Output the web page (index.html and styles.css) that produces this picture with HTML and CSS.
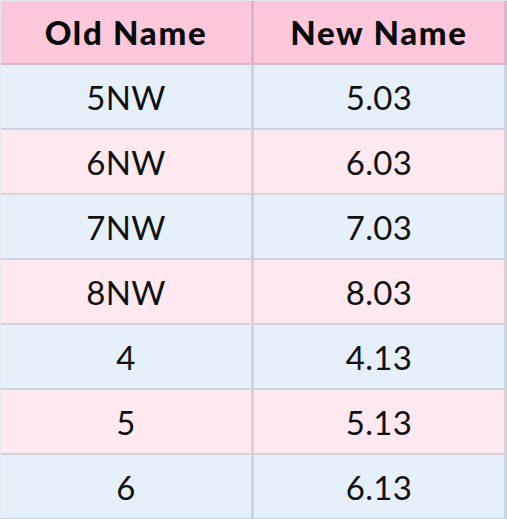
FILE: index.html
```html
<!DOCTYPE html>
<html>
<head>
<meta charset="utf-8">
<link rel="stylesheet" href="styles.css">
</head>
<body>
<table class="names">
  <thead>
    <tr><th>Old Name</th><th>New Name</th></tr>
  </thead>
  <tbody>
    <tr class="blue"><td>5NW</td><td>5.03</td></tr>
    <tr class="pink"><td>6NW</td><td>6.03</td></tr>
    <tr class="blue"><td>7NW</td><td>7.03</td></tr>
    <tr class="pink"><td>8NW</td><td>8.03</td></tr>
    <tr class="blue"><td>4</td><td>4.13</td></tr>
    <tr class="pink"><td>5</td><td>5.13</td></tr>
    <tr class="blue"><td>6</td><td>6.13</td></tr>
  </tbody>
</table>
</body>
</html>
```
FILE: styles.css
```css
html, body {
  margin: 0;
  padding: 0;
  background: #ffffff;
}
.names {
  border-collapse: separate;
  border-spacing: 0;
  width: 507px;
  table-layout: fixed;
  font-family: Lato, "Open Sans", sans-serif;
  color: #111111;
  border-top: 1px solid rgba(110, 120, 140, 0.18);
  border-left: 1px solid rgba(110, 120, 140, 0.18);
}
.names th,
.names td {
  height: 63px;
  padding: 0;
  text-align: center;
  vertical-align: middle;
  border-right: 3px solid rgba(100, 115, 135, 0.22);
  border-bottom: 2px solid rgba(100, 115, 135, 0.22);
}
.names th:first-child,
.names td:first-child {
  width: 250px;
}
.names th {
  background: #fdc8dc;
  font-weight: 900;
  font-size: 33px;
  letter-spacing: 1.7px;
  height: 62px;
  color: #0a0a0a;
}
.names td {
  font-size: 33px;
  font-weight: 400;
  letter-spacing: 0.3px;
}
.names tbody tr:last-child td {
  border-bottom-width: 3px;
}
.blue td {
  background: #e5f0fa;
}
.pink td {
  background: #fde9ef;
}
```
